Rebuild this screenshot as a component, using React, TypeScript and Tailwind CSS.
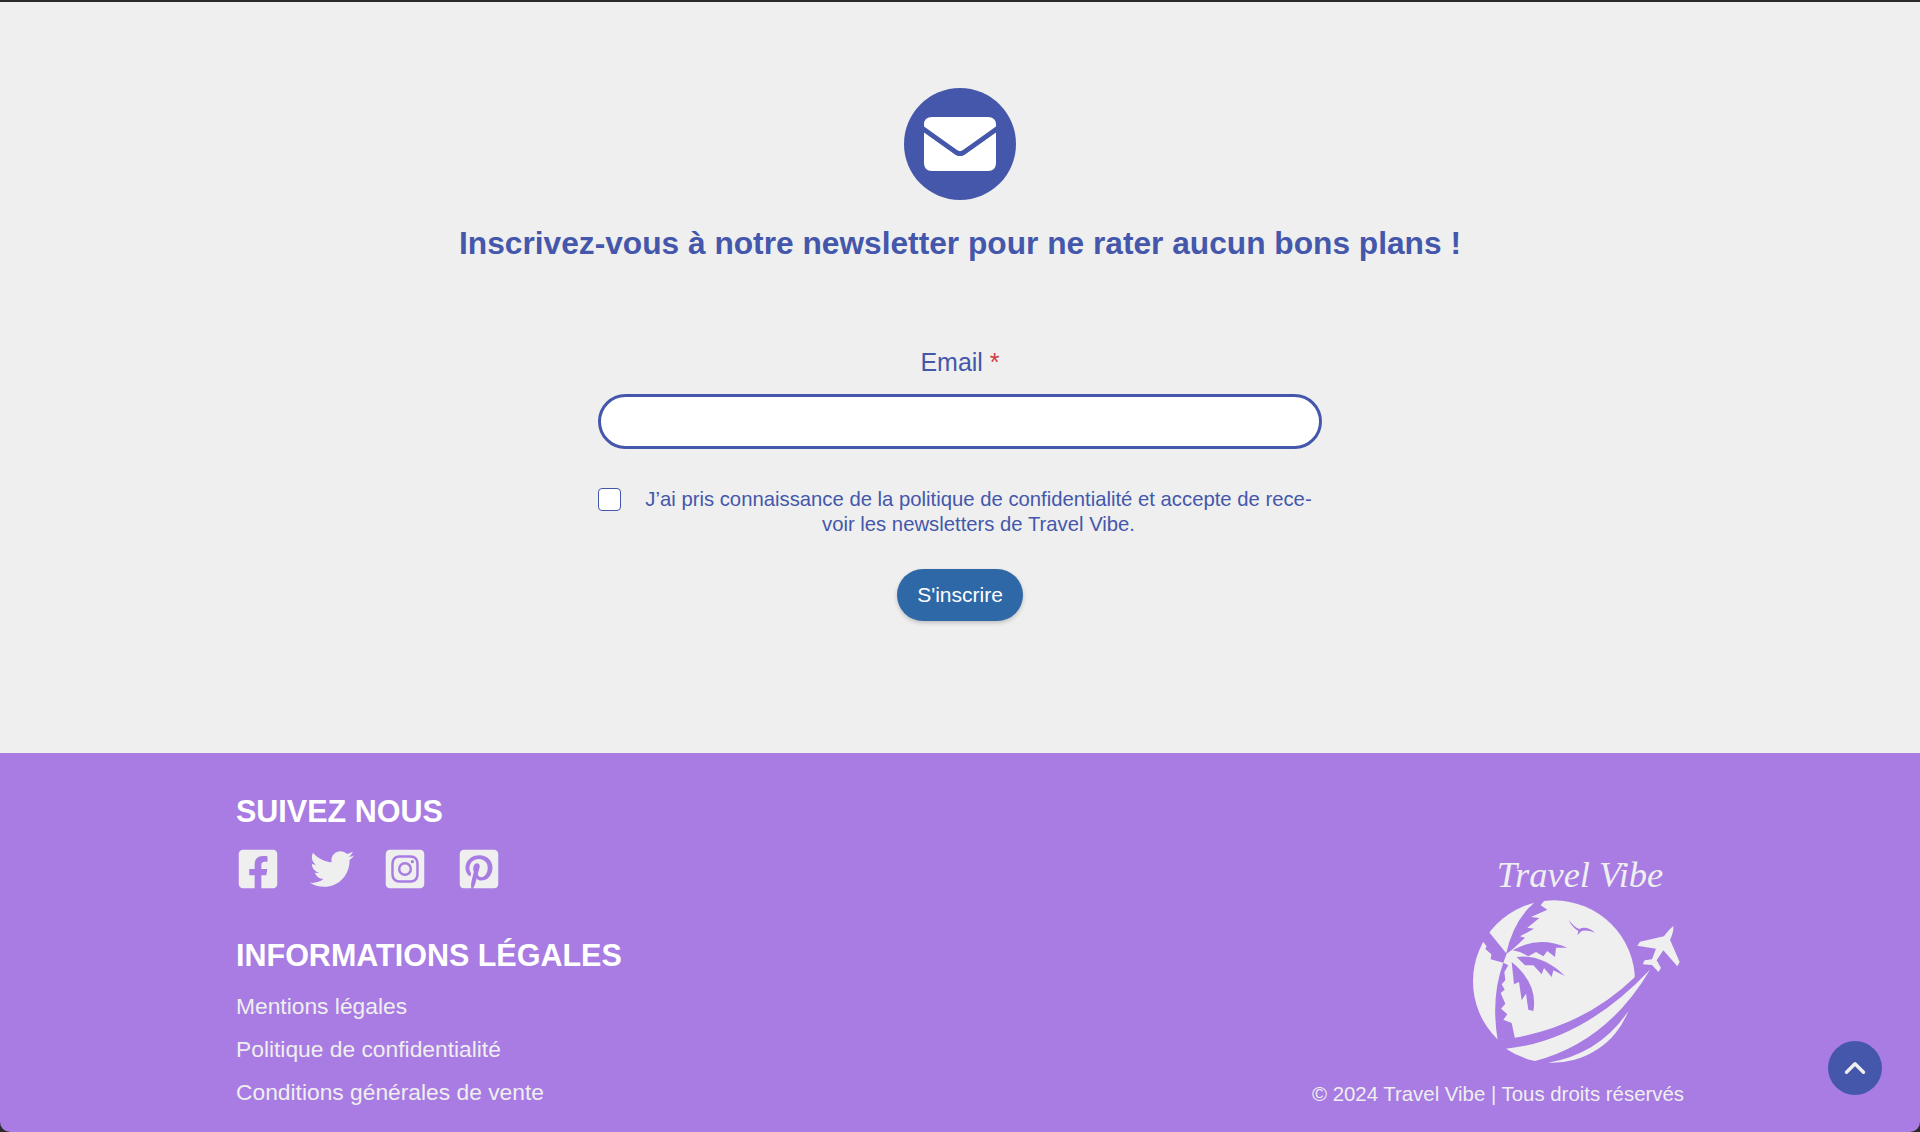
import { FaFacebookSquare, FaInstagramSquare, FaPinterestSquare, FaTwitter } from 'react-icons/fa';
import { FiChevronUp } from 'react-icons/fi';

const sans = 'font-["Liberation_Sans",Arial,sans-serif]';

function MailBadge() {
  return (
    <div className="flex h-[112px] w-[112px] items-center justify-center rounded-full bg-[#4457ab]">
      <svg width="72" height="54" viewBox="0 0 72 54" fill="#ffffff">
        <path d="M8 0H64C69 0 72 3 72 7V9.5L39 33C37 34.5 35 34.5 33 33L0 9.5V7C0 3 3 0 8 0Z" />
        <path d="M0 15.5L31 37.5C34 39.6 38 39.6 41 37.5L72 15.5V46C72 51 69 54 64 54H8C3 54 0 51 0 46Z" />
      </svg>
    </div>
  );
}

function NewsletterForm() {
  return (
    <section className="flex h-[751px] flex-col items-center bg-[#efefef] pt-[86px] text-[#4457ab]">
      <MailBadge />
      <h2 className="mt-[23px] text-[31.7px] leading-[40px] font-bold">
        Inscrivez-vous à notre newsletter pour ne rater aucun bons plans !
      </h2>
      <label className="mt-[84px] text-[25px] leading-[30px]">
        Email <span className="text-[#c9403f]">*</span>
      </label>
      <input
        type="text"
        className="mt-[17px] h-[55px] w-[724px] rounded-full border-[3px] border-[#4457ab] bg-white px-5 outline-none"
      />
      <div className="mt-[38px] flex w-[724px] items-start">
        <span className="mt-[1px] h-[23px] w-[23px] shrink-0 rounded-[4px] border-[1.5px] border-[#4457ab] bg-white" />
        <p className="ml-[21px] w-[673px] text-center text-[20.3px] leading-[25px] whitespace-nowrap">
          J’ai pris connaissance de la politique de confidentialité et accepte de rece-
          <br />
          voir les newsletters de Travel Vibe.
        </p>
      </div>
      <button className="mt-[32px] h-[52px] w-[126px] rounded-full bg-[#2e68a7] text-[21px] text-white shadow-[0_2px_4px_rgba(0,0,0,0.2)]">
        S&apos;inscrire
      </button>
    </section>
  );
}

function Logo() {
  return (
    <svg width="213" height="170" viewBox="0 0 639 510" fill="#efefef">
      <circle cx="252" cy="253" r="243" />
      <g fill="#a87ce3">
        {/* swoosh cut */}
        <path d="M83 430L135 422Q345 385 495 240L560 200V510H30Z" />
        {/* trunk */}
        <path d="M100 197Q62 300 83 430L135 425L125 378L100 368L112 352L93 335L106 320L92 288L104 278L95 262L106 250L103 225L115 205Z" />
        {/* fronds */}
        <path d="M192 18Q130 70 108 172L130 155L165 122L150 118L192 95L172 92L208 63L183 60L232 38L212 25L225 8L190 8Z" />
        <path d="M128 160Q205 115 292 152L258 152L255 180L232 162L220 178L198 165L175 178L150 165Z" />
        <path d="M140 180Q215 170 285 237L250 220L245 240L222 213L215 232L190 205L165 205Z" />
        <path d="M125 195Q205 260 190 342L175 338L168 290L155 310L147 255L132 262Z" />
        <path d="M57 105L110 170L100 197L62 187L64 172L46 156L50 148L40 135L30 110Z" />
        {/* bird */}
        <path d="M296 68Q312 90 328 96Q350 85 375 107Q350 97 335 102L322 115L325 102Q305 90 296 68Z" />
      </g>
      <circle cx="110" cy="187" r="5" />
      <circle cx="122" cy="186" r="5" />
      <path d="M108 455Q336 433 540 218Q412 435 195 492A243 243 0 0 1 108 455Z" />
      <path d="M235 497Q390 470 475 342A243 243 0 0 1 235 497Z" />
      <path d="M610 87Q612 105 600 128L629 195L622 208L580 160L560 190L573 213L565 225L546 204L518 202L524 190L546 187L558 155L502 146L510 134L582 118Q597 97 610 87Z" />
    </svg>
  );
}

function Footer() {
  const links = ['Mentions légales', 'Politique de confidentialité', 'Conditions générales de vente'];

  return (
    <footer className="relative flex h-[379px] items-end justify-between rounded-b-[10px] bg-[#a87ce3] pr-[236px] pl-[236px] text-white">
      <div className="flex h-full flex-col pt-[40px]">
        <h3 className="text-[30.5px] leading-[36px] font-bold">SUIVEZ NOUS</h3>
        <div className="mt-[18px] flex items-center gap-[29.5px] text-[#efefef]">
          <FaFacebookSquare className="h-[44px] w-[44px]" />
          <FaTwitter className="h-[44px] w-[44px]" />
          <FaInstagramSquare className="h-[44px] w-[44px]" />
          <FaPinterestSquare className="h-[44px] w-[44px]" />
        </div>
        <h3 className="mt-[46px] text-[30.5px] leading-[36px] font-bold">INFORMATIONS LÉGALES</h3>
        <ul className="mt-[19px] flex flex-col gap-[15px] text-[22.8px] leading-[28px] text-[#efefef]">
          {links.map((link) => (
            <li key={link}>{link}</li>
          ))}
        </ul>
      </div>
      <div className="flex flex-col items-end pb-[24px]">
        <div className="mr-[1px] flex flex-col items-center text-[#efefef]">
          <span className='pl-[7px] font-["Liberation_Serif",serif] text-[36.5px] leading-[44px] italic'>Travel Vibe</span>
          <Logo />
        </div>
        <p className="mt-[13px] text-[20.4px] leading-[28px] text-[#efefef]">© 2024 Travel Vibe | Tous droits réservés</p>
      </div>
      <button className="absolute right-[38px] bottom-[37px] flex h-[54px] w-[54px] items-center justify-center rounded-full bg-[#4457ab] text-[#efefef]">
        <FiChevronUp className="h-[34px] w-[34px]" strokeWidth={2.4} />
      </button>
    </footer>
  );
}

export default function App() {
  return (
    <main className={`${sans} min-h-[1132px] bg-[#2a2a2a] pt-[2px]`}>
      <NewsletterForm />
      <Footer />
    </main>
  );
}
